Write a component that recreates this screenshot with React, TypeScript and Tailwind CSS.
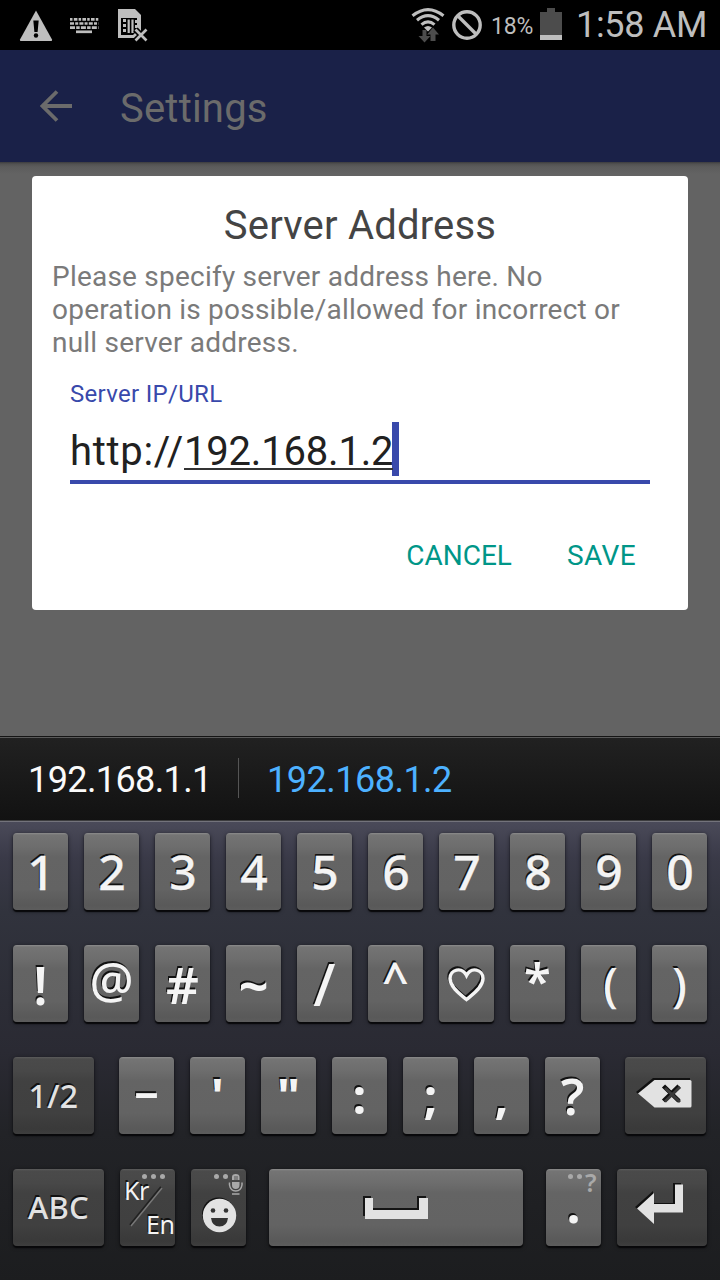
import type { ReactNode } from "react";

const LIGHT =
  "bg-[linear-gradient(to_bottom,#8c8c8c_0px,#747474_2px,#6d6d6d_14px,#646464_24px,#636363_56px,#595959_72px,#5c5c5c_77px)]";
const DARK =
  "bg-[linear-gradient(to_bottom,#5c5c5c_0px,#4a4a4a_2px,#484848_14px,#414141_24px,#404040_56px,#393939_72px,#3e3e3e_77px)]";

function Key({
  dark = false,
  className = "w-[55px]",
  children,
}: {
  dark?: boolean;
  className?: string;
  children: ReactNode;
}) {
  return (
    <div
      className={`relative flex h-[77px] shrink-0 items-center justify-center rounded-[4px] font-medium whitespace-nowrap shadow-[0_2px_1px_#08080a,0_1px_4px_rgba(0,0,0,0.55)] [text-shadow:-1px_-2px_0_#111] ${
        dark ? DARK + " text-[#e2e2e2]" : LIGHT + " text-[#f4f4f4]"
      } ${className}`}
    >
      {children}
    </div>
  );
}

function Glyph({ className = "text-[48px]", children }: { className?: string; children: ReactNode }) {
  return <span className={`leading-[77px] ${className}`}>{children}</span>;
}

function Dots({ n, className }: { n: number; className: string }) {
  return (
    <div className={`absolute flex gap-[4px] ${className}`}>
      {Array.from({ length: n }, (_, i) => (
        <span key={i} className="size-[5px] rounded-full bg-[#a9a9a9]" />
      ))}
    </div>
  );
}

function StatusBar() {
  return (
    <div className="flex h-[50px] items-center bg-black text-[#bebebe]">
      <svg className="ml-[19px]" width="34" height="50" viewBox="0 0 34 50">
        <path d="M17 10.500L33 39.500Q33.500 41 32 41H2Q.5 41 1 39.500Z" fill="#bebebe" />
        <path d="M14.300 20.500H19.700L18.600 32H15.400Z" fill="#000" />
        <circle cx="17" cy="35.500" r="2.200" fill="#000" />
      </svg>
      <svg className="ml-[17px]" width="29" height="50" viewBox="0 0 29 50">
        <g stroke="#bebebe" strokeWidth="2.700" fill="none">
          <path d="M0 19.300H28.500" strokeDasharray="2.500 1.300 3.600 1.200" />
          <path d="M0 23.500H28.500" strokeDasharray="4 1.200 3 1.200" />
          <path d="M0 27.600H28.500" strokeDasharray="5 1.200 3.500 1.200" />
          <path d="M6 31.800H22" />
        </g>
      </svg>
      <svg className="ml-[18px]" width="31" height="50" viewBox="0 0 31 50">
        <path d="M1 9H18L24 15V38H1Z" fill="#bebebe" />
        <path d="M4 18H20V31L16 35H4Z" fill="#000" />
        <path d="M6 20.500h3M6 25.500h3M6 30.500h3" stroke="#bebebe" strokeWidth="3" />
        <path d="M11.700 19.500V33M15.500 19.500V33" stroke="#bebebe" strokeWidth="2.200" />
        <path d="M18 20h2v3h-2zM18 25h2v3h-2z" fill="#bebebe" />
        <path d="M18.500 29.500L29.500 40.500M29.500 29.500L18.500 40.500" stroke="#000" strokeWidth="6" />
        <path d="M18.500 29.500L29.500 40.500M29.500 29.500L18.500 40.500" stroke="#bebebe" strokeWidth="2.700" />
      </svg>
      <svg className="ml-[263px]" width="34" height="50" viewBox="0 0 34 50">
        <g stroke="#bebebe" strokeWidth="3.100" fill="none">
          <path d="M1.500 15.800Q17 3.500 32.500 15.800" />
          <path d="M6 20.200Q17 11 28 20.200" />
          <path d="M10.500 24.600Q17 19 23.500 24.600" />
        </g>
        <path d="M13 27.500Q17 24.500 21 27.500L17 31.500Z" fill="#bebebe" />
        <path d="M11.500 30h4v6h4l-6 6.500l-6-6.500h4Z" fill="#4c4c4c" />
        <path d="M19.500 41v-6.500h-3.500l6-7l6 7h-3.500v6.500Z" fill="#4c4c4c" />
      </svg>
      <svg className="ml-[7px]" width="30" height="50" viewBox="0 0 30 50">
        <circle cx="15" cy="25" r="13.200" stroke="#bebebe" strokeWidth="3.400" fill="none" />
        <path d="M5.500 15.500L24.500 34.500" stroke="#bebebe" strokeWidth="3.400" />
      </svg>
      <span className="ml-[9px] w-[45px] pt-[3px] text-[23px] leading-[48px] tracking-[-0.2px]">18%</span>
      <svg className="ml-[4px]" width="22" height="50" viewBox="0 0 22 50">
        <path d="M0 12H7V8H15V12H22V35H0Z" fill="#4c4c4c" />
        <path d="M0 35H22V40H0Z" fill="#bebebe" />
      </svg>
      <span className="ml-[14px] text-[36px] leading-[50px] tracking-[-0.3px] whitespace-nowrap">1:58 AM</span>
    </div>
  );
}

function Dialog() {
  return (
    <div className="flex h-[434px] flex-col rounded-[4px] bg-white">
      <h2 className="pt-[25px] text-center text-[40px] leading-[50px] tracking-[0.2px] text-[#444]">Server Address</h2>
      <p className="pt-[9px] pl-[20px] text-[28px] leading-[33px] tracking-[0.22px] whitespace-nowrap text-[#7a7a7a]">
        Please specify server address here. No
        <br />
        operation is possible/allowed for incorrect or
        <br />
        null server address.
      </p>
      <div className="mx-[38px] mt-[20px] border-b-4 border-[#3949ab]">
        <label className="block text-[24px] leading-[30px] tracking-[0.3px] text-[#3949ab]">Server IP/URL</label>
        <div className="mt-[13px] flex h-[58px] text-[40px] leading-[60px] whitespace-nowrap text-[#212121]">
          <span className="w-[114px] tracking-[0.7px]">http://</span>
          <span className="relative w-[209px] tracking-[-0.2px]">
            192.168.1.2
            <span className="absolute top-[46px] left-0 h-[2px] w-full bg-[#333]" />
          </span>
          <span className="-ml-px h-[54px] w-[7px] bg-[#3949ab]" />
        </div>
      </div>
      <div className="flex justify-end pt-[47px] pr-[52px] text-[28px] leading-[50px] text-[#009688]">
        <button className="mr-[55px]">CANCEL</button>
        <button className="tracking-[0.4px]">SAVE</button>
      </div>
    </div>
  );
}

function Keyboard() {
  return (
    <div className="flex h-[459px] flex-col gap-[35px] border-t border-[#73737b] bg-[linear-gradient(to_bottom,#4a4a59_0px,#3a3a48_35px,#31333d_90px,#2c2d36_180px,#2a2a33_230px,#222327_310px,#1c1d1f_459px)] px-[13px] pt-[11px] font-['Noto_Sans',sans-serif]">
      <div className="flex gap-[16px]">
        {["1", "2", "3", "4", "5", "6", "7", "8", "9", "0"].map((k) => (
          <Key key={k}>
            <Glyph className="pl-px text-[48px] [-webkit-text-stroke:0.3px_#f4f4f4]">{k}</Glyph>
          </Key>
        ))}
      </div>
      <div className="flex gap-[16px]">
        <Key><Glyph className="pt-px text-[52px] font-semibold">!</Glyph></Key>
        <Key><Glyph className="pb-[9px] text-[49px]">@</Glyph></Key>
        <Key><Glyph className="pt-[2px] text-[51px] font-semibold">#</Glyph></Key>
        <Key><Glyph className="pt-[2px] text-[52px] font-bold">~</Glyph></Key>
        <Key><Glyph className="pb-px text-[58px]">/</Glyph></Key>
        <Key><Glyph className="pb-[11px] text-[46px] font-semibold">^</Glyph></Key>
        <Key>
          <svg width="41" height="40" viewBox="0 0 41 40" fill="none" strokeWidth="3.400">
            <path d="M20.500 34.500C15 30 4 22.500 4 13.500C4 4 16 1.500 20.500 10.500C25 1.500 37 4 37 13.500C37 22.500 26 30 20.500 34.500Z" stroke="#111" transform="translate(-1 -1)" />
            <path d="M20.500 35.500C15 31 4 23.500 4 14.500C4 5 16 2.500 20.500 11.500C25 2.500 37 5 37 14.500C37 23.500 26 31 20.500 35.500Z" stroke="#f4f4f4" />
          </svg>
        </Key>
        <Key><Glyph className="pb-[6px] text-[49px] font-semibold">*</Glyph></Key>
        <Key><Glyph className="pl-[4px] text-[48px]">(</Glyph></Key>
        <Key><Glyph className="text-[48px]">)</Glyph></Key>
      </div>
      <div className="flex gap-[16px]">
        <Key dark className="mr-[9px] w-[81px]"><Glyph className="text-[32px] tracking-[0.3px]">1/2</Glyph></Key>
        <Key><Glyph className="pb-[10px] text-[49px] font-semibold">–</Glyph></Key>
        <Key><Glyph className="text-[48px] font-bold">'</Glyph></Key>
        <Key><Glyph className="text-[48px] font-bold">"</Glyph></Key>
        <Key><Glyph className="pb-px text-[49px] font-bold">:</Glyph></Key>
        <Key><Glyph className="pb-px text-[49px] font-bold">;</Glyph></Key>
        <Key><Glyph className="pb-px text-[49px] font-bold">,</Glyph></Key>
        <Key><Glyph className="pb-px text-[51px] font-semibold">?</Glyph></Key>
        <Key dark className="ml-[9px] w-[81px]">
          <svg width="81" height="77" viewBox="0 0 81 77">
            <path d="M11 35L28 21H65V49H28Z" fill="#111" />
            <path d="M13 36.500L29.500 23H65Q66.500 23 66.500 24.500V49Q66.500 50.500 65 50.500H29.500Z" fill="#e2e2e2" />
            <path d="M38.500 29L54 44M54 29L38.500 44" stroke="#111" strokeWidth="4.500" />
            <path d="M40 31L55 45M55 30L40 44.500" stroke="#3a3a3a" strokeWidth="3" />
          </svg>
        </Key>
      </div>
      <div className="flex">
        <Key dark className="w-[91px]"><Glyph className="text-[31px] tracking-[0.3px]">ABC</Glyph></Key>
        <Key dark className="ml-[16px] w-[55px] text-[#f4f4f4]">
          <Dots n={3} className="top-[5px] left-[22px]" />
          <svg width="55" height="77" viewBox="0 0 55 77">
            <path d="M10 56L41 18" stroke="#222" strokeWidth="2" />
            <path d="M11 57L42 19" stroke="#777" strokeWidth="1.500" />
          </svg>
          <span className="absolute top-[3px] left-[4px] text-[25px] leading-[36px] font-normal tracking-[-0.5px]">Kr</span>
          <span className="absolute top-[37px] left-[26px] text-[25px] leading-[36px] font-normal tracking-[-0.5px]">En</span>
        </Key>
        <Key dark className="ml-[16px] w-[55px]">
          <Dots n={2} className="top-[5px] left-[23px]" />
          <svg width="55" height="77" viewBox="0 0 55 77">
            <circle cx="27.500" cy="45" r="16.500" fill="#111" />
            <circle cx="28.500" cy="46.500" r="16.700" fill="#e2e2e2" />
            <circle cx="22" cy="41.500" r="2.300" fill="#333" />
            <circle cx="35" cy="41.500" r="2.300" fill="#333" />
            <path d="M20 49H37Q36 57.500 28.500 57.500Q21 57.500 20 49Z" fill="#333" />
            <path d="M41 11V8Q41 5 44.700 5Q48.500 5 48.500 8V11ZM41 13H48.500V16Q48.500 20 44.700 20Q41 20 41 16Z" fill="#a9a9a9" />
            <path d="M43 8H47M43 10H47" stroke="#555" />
            <path d="M38.500 13.500V16Q39.500 22 44.700 22Q50 22 51 16V13.500M41 25H48.500" stroke="#a9a9a9" strokeWidth="1.500" fill="none" />
          </svg>
        </Key>
        <Key className="ml-[23px] w-[254px]">
          <svg className="mr-[2px]" width="66" height="26" viewBox="0 0 66 26">
            <path d="M1 1H9V13H55V1H64V21H1Z" fill="#151515" />
            <path d="M3 3H11V15H57V3H66V24H3Z" fill="#e2e2e2" />
          </svg>
        </Key>
        <Key className="ml-[23px] w-[55px]">
          <Dots n={2} className="top-[5px] left-[22px]" />
          <span className="absolute top-0 left-[39px] text-[25px] leading-[26px] font-semibold text-[#a9a9a9] [text-shadow:none]">?</span>
          <Glyph className="pb-[6px] text-[50px] font-bold">.</Glyph>
        </Key>
        <Key dark className="ml-[16px] w-[90px]">
          <svg width="90" height="77" viewBox="0 0 90 77">
            <path d="M18 38L36 22V34H56V14H64V42H36V53Z" fill="#111" />
            <path d="M20 39.500L37 24V35H58V15.500H66V43.500H37V55Z" fill="#e2e2e2" />
          </svg>
        </Key>
      </div>
    </div>
  );
}

export default function App() {
  return (
    <div className="flex h-[1280px] w-[720px] flex-col overflow-hidden bg-[#636363] font-[Roboto,sans-serif]">
      <StatusBar />
      <header className="flex h-[112px] items-center bg-[#1a2148] text-[#6b6b6b]">
        <svg className="ml-[40px]" width="32" height="32" viewBox="0 0 32 32">
          <path d="M32 16H3M17 1.500L2.500 16L17 30.500" stroke="#6b6b6b" strokeWidth="3.800" fill="none" />
        </svg>
        <h1 className="ml-[48px] pt-[5px] text-[40px] leading-[50px] tracking-[0.2px]">Settings</h1>
      </header>
      <main className="h-[574px] bg-[linear-gradient(to_bottom,#3c3c3f_0px,#525252_2px,#5c5c5c_5px,#636363_12px)] px-[32px] pt-[14px]">
        <Dialog />
      </main>
      <div className="flex h-[85px] items-center border-t border-[#151515] bg-[linear-gradient(to_bottom,#5a5a5a_0px,#5a5a5a_1px,#212121_1px,#121212_83px,#3c3c3e_83px)] text-[36px] whitespace-nowrap">
        <span className="w-[238px] pt-[2px] pl-[28px] tracking-[-0.6px] text-[#fafafa]">192.168.1.1</span>
        <span className="mb-[2px] h-[40px] w-px bg-[#555]" />
        <span className="pt-[2px] pl-[28px] tracking-[-0.5px] text-[#4db1ff]">192.168.1.2</span>
      </div>
      <Keyboard />
    </div>
  );
}
